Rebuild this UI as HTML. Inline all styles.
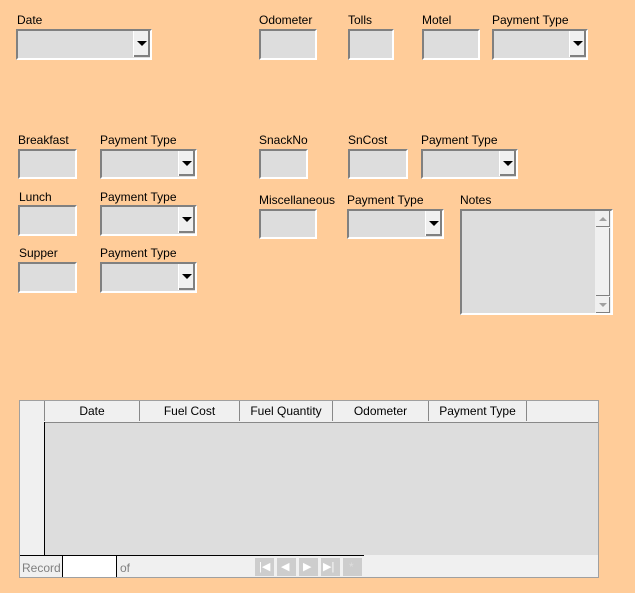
<!DOCTYPE html>
<html><head><style>
body{margin:0;width:635px;height:593px;background:#ffcc99;font-family:"Liberation Sans",sans-serif;font-size:12px;color:#000;position:relative;overflow:hidden}
.l{position:absolute;white-space:nowrap}
.f{position:absolute;background:#dddddd;box-sizing:border-box;border:2px solid;border-color:#808080 #fff #fff #808080}
.c .b{position:absolute;right:0;top:0;bottom:1px;width:16px;background:#f0f0f0;border-left:1px solid #fff;box-shadow:inset -2px -2px #808080}
.c .b:after{content:"";position:absolute;left:3px;top:10px;border-left:5px solid transparent;border-right:5px solid transparent;border-top:5px solid #000}
.g{position:absolute;left:19px;top:400px;width:580px;height:178px;background:#dddddd;border:1px solid #a0a0a0;box-sizing:border-box}
.h{position:absolute;top:0;height:20px;border-right:1px solid #888;text-align:center;line-height:20px;box-sizing:border-box;background:#f0f0f0}
.nb{position:absolute;top:558px;width:19px;height:18px;background:#cdcdcd}
</style></head><body>
<div class="l" style="left:17px;top:13px">Date</div>
<div class="f c" style="left:16px;top:29px;width:136px;height:31px"><div class="b"></div></div>
<div class="l" style="left:259px;top:13px">Odometer</div>
<div class="f" style="left:259px;top:29px;width:58px;height:31px"></div>
<div class="l" style="left:348px;top:13px">Tolls</div>
<div class="f" style="left:348px;top:29px;width:46px;height:31px"></div>
<div class="l" style="left:422px;top:13px">Motel</div>
<div class="f" style="left:422px;top:29px;width:58px;height:31px"></div>
<div class="l" style="left:492px;top:13px">Payment Type</div>
<div class="f c" style="left:492px;top:29px;width:96px;height:31px"><div class="b"></div></div>

<div class="l" style="left:18px;top:133px">Breakfast</div>
<div class="f" style="left:18px;top:149px;width:59px;height:30px"></div>
<div class="l" style="left:100px;top:133px">Payment Type</div>
<div class="f c" style="left:100px;top:149px;width:97px;height:30px"><div class="b"></div></div>
<div class="l" style="left:19px;top:190px">Lunch</div>
<div class="f" style="left:18px;top:205px;width:59px;height:31px"></div>
<div class="l" style="left:100px;top:190px">Payment Type</div>
<div class="f c" style="left:100px;top:205px;width:97px;height:31px"><div class="b"></div></div>
<div class="l" style="left:19px;top:246px">Supper</div>
<div class="f" style="left:18px;top:262px;width:59px;height:31px"></div>
<div class="l" style="left:100px;top:246px">Payment Type</div>
<div class="f c" style="left:100px;top:262px;width:97px;height:31px"><div class="b"></div></div>

<div class="l" style="left:259px;top:133px">SnackNo</div>
<div class="f" style="left:259px;top:149px;width:49px;height:30px"></div>
<div class="l" style="left:348px;top:133px">SnCost</div>
<div class="f" style="left:348px;top:149px;width:60px;height:30px"></div>
<div class="l" style="left:421px;top:133px">Payment Type</div>
<div class="f c" style="left:421px;top:149px;width:97px;height:30px"><div class="b"></div></div>
<div class="l" style="left:259px;top:193px">Miscellaneous</div>
<div class="f" style="left:259px;top:209px;width:58px;height:30px"></div>
<div class="l" style="left:347px;top:193px">Payment Type</div>
<div class="f c" style="left:347px;top:209px;width:97px;height:30px"><div class="b"></div></div>
<div class="l" style="left:460px;top:193px">Notes</div>
<div class="f" style="left:460px;top:209px;width:153px;height:106px">
 <div style="position:absolute;right:0;top:0;width:16px;bottom:0;background:#f0f0f0">
  <div style="position:absolute;left:1px;top:0;width:14px;height:16px;box-shadow:inset -1px -1px #808080"><div style="position:absolute;left:3px;top:6px;border-left:4px solid transparent;border-right:4px solid transparent;border-bottom:4px solid #a0a0a0"></div></div>
  <div style="position:absolute;left:1px;top:17px;width:14px;height:68px;box-shadow:inset -1px -1px #808080"></div>
  <div style="position:absolute;left:1px;bottom:0;width:14px;height:16px;box-shadow:inset -1px -1px #808080"><div style="position:absolute;left:3px;top:6px;border-left:4px solid transparent;border-right:4px solid transparent;border-top:4px solid #a0a0a0"></div></div>
 </div>
</div>

<div class="g">
 <div style="position:absolute;left:0;top:0;right:0;height:21px;background:#f0f0f0;border-bottom:1px solid #888"></div>
 <div style="position:absolute;left:0;top:21px;width:24px;height:133px;background:#f0f0f0;border-right:1px solid #000"></div>
 <div class="h" style="left:0;width:25px"></div>
 <div class="h" style="left:25px;width:95px">Date</div>
 <div class="h" style="left:120px;width:100px">Fuel Cost</div>
 <div class="h" style="left:220px;width:93px">Fuel Quantity</div>
 <div class="h" style="left:313px;width:96px">Odometer</div>
 <div class="h" style="left:409px;width:98px">Payment Type</div>
 <div style="position:absolute;left:0;top:154px;right:0;bottom:0;background:#f0f0f0"></div>
 <div style="position:absolute;left:0;top:154px;width:344px;height:1px;background:#000"></div>
</div>
<div class="l" style="left:22px;top:561px;color:#808080">Record</div>
<div style="position:absolute;left:62px;top:556px;width:1px;height:21px;background:#000"></div>
<div style="position:absolute;left:63px;top:556px;width:53px;height:21px;background:#fff"></div>
<div style="position:absolute;left:116px;top:556px;width:1px;height:21px;background:#000"></div>
<div class="l" style="left:120px;top:561px;color:#808080">of</div>
<div class="nb" style="left:255px"></div><div class="nb" style="left:277px"></div><div class="nb" style="left:299px"></div><div class="nb" style="left:321px"></div><div class="nb" style="left:343px"></div>
<div class="l" style="left:259px;top:560px;color:#fff;font-size:11px">|◀</div>
<div class="l" style="left:281px;top:560px;color:#fff;font-size:11px">◀</div>
<div class="l" style="left:303px;top:560px;color:#fff;font-size:11px">▶</div>
<div class="l" style="left:323px;top:560px;color:#fff;font-size:11px">▶|</div>
<div class="l" style="left:349px;top:560px;color:#ddd">*</div>
</body></html>
